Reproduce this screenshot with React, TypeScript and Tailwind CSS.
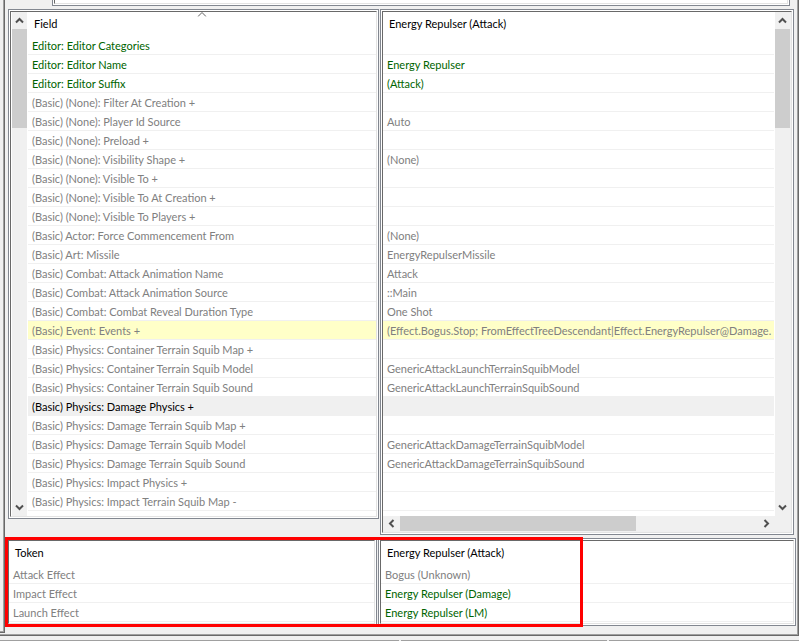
import type { ReactNode } from "react";

type Tone = "set" | "default" | "selected";
type Row = { text: string; tone?: Tone; bg?: "event" | "selected" };

const fieldRows: Row[] = [
  { text: "Editor: Editor Categories", tone: "set" },
  { text: "Editor: Editor Name", tone: "set" },
  { text: "Editor: Editor Suffix", tone: "set" },
  { text: "(Basic) (None): Filter At Creation +" },
  { text: "(Basic) (None): Player Id Source" },
  { text: "(Basic) (None): Preload +" },
  { text: "(Basic) (None): Visibility Shape +" },
  { text: "(Basic) (None): Visible To +" },
  { text: "(Basic) (None): Visible To At Creation +" },
  { text: "(Basic) (None): Visible To Players +" },
  { text: "(Basic) Actor: Force Commencement From" },
  { text: "(Basic) Art: Missile" },
  { text: "(Basic) Combat: Attack Animation Name" },
  { text: "(Basic) Combat: Attack Animation Source" },
  { text: "(Basic) Combat: Combat Reveal Duration Type" },
  { text: "(Basic) Event: Events +", bg: "event" },
  { text: "(Basic) Physics: Container Terrain Squib Map +" },
  { text: "(Basic) Physics: Container Terrain Squib Model" },
  { text: "(Basic) Physics: Container Terrain Squib Sound" },
  { text: "(Basic) Physics: Damage Physics +", tone: "selected", bg: "selected" },
  { text: "(Basic) Physics: Damage Terrain Squib Map +" },
  { text: "(Basic) Physics: Damage Terrain Squib Model" },
  { text: "(Basic) Physics: Damage Terrain Squib Sound" },
  { text: "(Basic) Physics: Impact Physics +" },
  { text: "(Basic) Physics: Impact Terrain Squib Map -" },
];

const valueRows: Row[] = [
  { text: "" },
  { text: "Energy Repulser", tone: "set" },
  { text: "(Attack)", tone: "set" },
  { text: "" },
  { text: "Auto" },
  { text: "" },
  { text: "(None)" },
  { text: "" },
  { text: "" },
  { text: "" },
  { text: "(None)" },
  { text: "EnergyRepulserMissile" },
  { text: "Attack" },
  { text: "::Main" },
  { text: "One Shot" },
  {
    text: "(Effect.Bogus.Stop; FromEffectTreeDescendant|Effect.EnergyRepulser@Damage.",
    bg: "event",
  },
  { text: "" },
  { text: "GenericAttackLaunchTerrainSquibModel" },
  { text: "GenericAttackLaunchTerrainSquibSound" },
  { text: "", bg: "selected" },
  { text: "" },
  { text: "GenericAttackDamageTerrainSquibModel" },
  { text: "GenericAttackDamageTerrainSquibSound" },
  { text: "" },
  { text: "" },
];

const tokenRows: Row[] = [
  { text: "Attack Effect" },
  { text: "Impact Effect" },
  { text: "Launch Effect" },
];

const tokenValueRows: Row[] = [
  { text: "Bogus (Unknown)" },
  { text: "Energy Repulser (Damage)", tone: "set" },
  { text: "Energy Repulser (LM)", tone: "set" },
];

const toneClass: Record<Tone, string> = {
  set: "text-[#006400]",
  default: "text-[#808080]",
  selected: "text-black",
};

function Panel({ children, className = "" }: { children: ReactNode; className?: string }) {
  return (
    <div className={`min-w-0 border border-[#828790] bg-white p-px ${className}`}>
      <div className="flex h-full border border-r-[#e3e3e3] border-b-[#e3e3e3] border-t-[#696969] border-l-[#696969]">
        {children}
      </div>
    </div>
  );
}

function Grid({ title, rows, sorted = false }: { title: string; rows: Row[]; sorted?: boolean }) {
  return (
    <table className="w-full table-fixed border-separate border-spacing-0 text-left">
      <thead>
        <tr>
          <th className="relative h-6 overflow-hidden p-0 pl-1.5 font-normal whitespace-nowrap text-black">
            {title}
            {sorted && (
              <svg
                className="absolute top-0 left-1/2 h-[5px] w-[9px] -translate-x-1/2"
                viewBox="0 0 9 5"
                fill="none"
                stroke="#606060"
              >
                <path d="M0.5 4.5 L4.5 0.5 L8.5 4.5" />
              </svg>
            )}
          </th>
        </tr>
      </thead>
      <tbody>
        {rows.map((row, i) => {
          const bg =
            row.bg === "event" ? "bg-[#ffffc8]" : row.bg === "selected" ? "bg-[#f0f0f0]" : "";
          return (
            <tr key={i} className={bg}>
              <td
                className={`h-[19px] overflow-hidden border-b border-[#f0f0f0] p-0 pt-0.5 pl-1 whitespace-nowrap ${toneClass[row.tone ?? "default"]}`}
              >
                {row.text}
              </td>
            </tr>
          );
        })}
      </tbody>
    </table>
  );
}

const arrows = {
  up: "M1 6.5 L4.5 3 L8 6.5",
  down: "M1 2.5 L4.5 6 L8 2.5",
  left: "M6.5 1 L3 4.5 L6.5 8",
  right: "M2.5 1 L6 4.5 L2.5 8",
};

function ArrowButton({ dir, className }: { dir: keyof typeof arrows; className: string }) {
  return (
    <button
      type="button"
      aria-label={`Scroll ${dir}`}
      className={`flex shrink-0 items-center justify-center ${className}`}
    >
      <svg className="size-[9px]" viewBox="0 0 9 9" fill="none" stroke="#505050" strokeWidth="2">
        <path d={arrows[dir]} />
      </svg>
    </button>
  );
}

function VerticalScroll() {
  return (
    <div className="flex w-[15px] shrink-0 flex-col bg-[#f0f0f0]">
      <ArrowButton dir="up" className="h-[17px]" />
      <div className="flex-1">
        <div className="h-[99px] bg-[#cdcdcd]" />
      </div>
      <ArrowButton dir="down" className="h-[17px]" />
    </div>
  );
}

function HorizontalScroll() {
  return (
    <div className="flex h-[15px] bg-[#f0f0f0]">
      <ArrowButton dir="left" className="w-[17px]" />
      <div className="flex-1">
        <div className="h-full w-[66%] bg-[#cdcdcd]" />
      </div>
      <ArrowButton dir="right" className="w-[17px]" />
    </div>
  );
}

export default function App() {
  return (
    <div className="bg-[#f0f0f0] font-[Lato,'Liberation_Sans',sans-serif] text-[11px] leading-[16px]">
      <div className="border-r border-b border-[#696969]">
        <div className="flex border-r border-b border-[#a0a0a0]">
          <div className="mb-px w-[5px] shrink-0 border-r border-b border-[#696969]">
            <div className="h-full border-r border-b border-[#a0a0a0]" />
          </div>

          <main className="min-w-0 flex-1 pb-2">
            <div className="mr-[7px] ml-[47px] border border-t-0 border-[#828790] bg-white px-px pb-px">
              <div className="h-1 border border-t-0 border-r-[#e3e3e3] border-b-[#e3e3e3] border-l-[#696969]" />
            </div>

            <div className="mt-[3px] grid grid-cols-[371fr_414fr] items-start gap-px px-[3px]">
              <Panel>
                <div className="flex min-w-0 flex-1 pl-px">
                  <VerticalScroll />
                  <div className="min-w-0 flex-1 pb-[5px] pl-px">
                    <Grid title="Field" rows={fieldRows} sorted />
                  </div>
                </div>
              </Panel>
              <Panel>
                <div className="min-w-0 flex-1 bg-[#f0f0f0] pr-px pb-px">
                  <div className="flex bg-white">
                    <div className="min-w-0 flex-1 pr-px pb-[5px]">
                      <Grid title="Energy Repulser (Attack)" rows={valueRows} />
                    </div>
                    <VerticalScroll />
                  </div>
                  <div className="pr-[15px]">
                    <HorizontalScroll />
                  </div>
                </div>
              </Panel>
            </div>

            <div className="relative mt-[3px] grid grid-cols-[371fr_418fr] gap-px px-px">
              <Panel>
                <div className="min-w-0 flex-1 pb-px">
                  <Grid title="Token" rows={tokenRows} />
                </div>
              </Panel>
              <Panel>
                <div className="min-w-0 flex-1 pb-px">
                  <Grid title="Energy Repulser (Attack)" rows={tokenValueRows} />
                </div>
              </Panel>
              <div className="pointer-events-none absolute -top-px -bottom-px left-0 w-[73%] border-3 border-[#ff0000]" />
            </div>
          </main>
        </div>
      </div>

      <footer className="mt-1 grid grid-cols-[399fr_206fr_190fr] gap-0.5">
        <div className="h-px bg-[#a0a0a0]" />
        <div className="h-px bg-[#a0a0a0]" />
        <div className="h-px bg-[#a0a0a0]" />
      </footer>
    </div>
  );
}
